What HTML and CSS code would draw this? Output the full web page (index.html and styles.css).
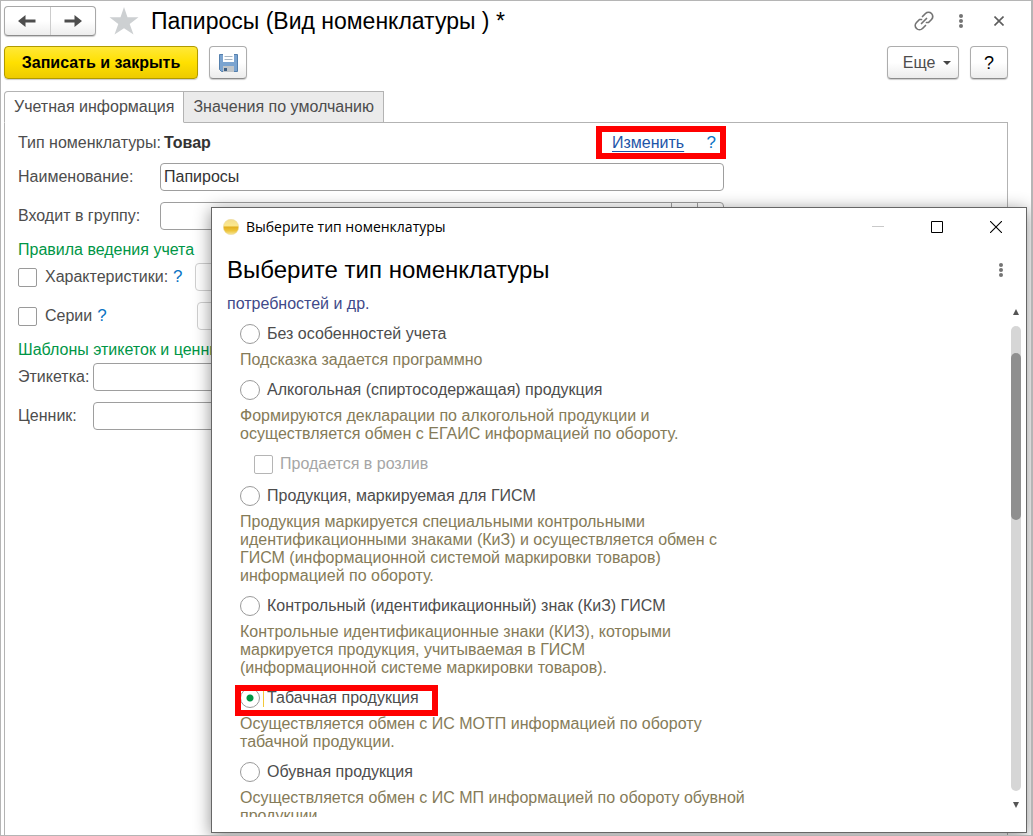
FILE: index.html
```html
<!DOCTYPE html>
<html lang="ru">
<head>
<meta charset="utf-8">
<title>Папиросы (Вид номенклатуры)</title>
<link rel="stylesheet" href="styles.css">
</head>
<body>
<div class="app">
  <header class="header">
    <div class="nav">
      <button type="button" class="nav-btn" aria-label="Назад"><svg width="18" height="14" viewBox="0 0 18 14"><path d="M0 7L7.500 1V5.500H17.500V8.500H7.500V13Z" fill="#4d4d4d"/></svg></button>
      <button type="button" class="nav-btn" aria-label="Вперед"><svg width="18" height="14" viewBox="0 0 18 14"><path d="M18 7L10.500 1V5.500H.5V8.500H10.500V13Z" fill="#4d4d4d"/></svg></button>
    </div>
    <button type="button" class="icon-btn star" aria-label="Избранное"><svg width="30" height="28" viewBox="0 0 30 28"><path d="M15 0L18.500 10.200H29.500L20.700 16.900L24.500 27.500L15 21.200L5.500 27.500L9.300 16.900L.5 10.200H11.500Z" fill="#cdd0d2"/></svg></button>
    <h1 class="title">Папиросы (Вид номенклатуры ) *</h1>
    <div class="header-tools">
      <button type="button" class="icon-btn" aria-label="Ссылка"><svg width="20" height="20" viewBox="0 0 20 20" fill="none" stroke="#747474" stroke-width="1.700" stroke-linecap="round"><path d="M8.500 5.500L11.500 2.500A4 4 0 0 1 17.500 8.500L14.500 11.500H12.500M11.500 14.500L8.500 17.500A4 4 0 0 1 2.500 11.500L5.500 8.500H7.500M7.500 12.500L12.500 7.500"/></svg></button>
      <button type="button" class="icon-btn" aria-label="Меню"><svg width="4" height="14" viewBox="0 0 4 14" fill="#747474"><circle cx="2" cy="2" r="2"/><circle cx="2" cy="7" r="2"/><circle cx="2" cy="12" r="2"/></svg></button>
      <button type="button" class="icon-btn close" aria-label="Закрыть"><svg width="10" height="10" viewBox="0 0 10 10" stroke="#5d5d5d" stroke-width="1.600"><path d="M.5 .5L9.500 9.500M9.500 .5L.5 9.500"/></svg></button>
    </div>
  </header>

  <div class="commands">
    <button type="button" class="btn btn-primary">Записать и закрыть</button>
    <button type="button" class="btn btn-square" aria-label="Записать"><svg width="19" height="18" viewBox="0 0 19 18"><path d="M.5 .5H18.500V17.500H2.500L.5 15.500Z" fill="#7ba4d0" stroke="#5580ad"/><path d="M4 0H15V8H4Z" fill="#fff"/><path d="M5.500 2.500H13.500M5.500 5.500H13.500" stroke="#a9b6c2"/><path d="M4 12H15V18H4Z" fill="#c0c5c9"/><path d="M5 14H8V17H5Z" fill="#3f6084"/></svg></button>
    <span class="spacer"></span>
    <button type="button" class="btn btn-more">Еще <svg width="8" height="4" viewBox="0 0 8 4"><path d="M0 0H8L4 4Z" fill="#444"/></svg></button>
    <button type="button" class="btn btn-square btn-help">?</button>
  </div>

  <div class="tabs" role="tablist">
    <button type="button" role="tab" class="tab tab-active" aria-selected="true">Учетная информация</button>
    <button type="button" role="tab" class="tab" aria-selected="false">Значения по умолчанию</button>
  </div>

  <main class="panel">
    <div class="row row-type">
      <span class="label-wide">Тип номенклатуры:</span>
      <strong class="type-value">Товар</strong>
      <span class="type-link"><a href="#">Изменить</a><a class="hint-link" href="#">?</a></span>
    </div>
    <div class="row">
      <label class="label-wide" for="name">Наименование:</label>
      <input class="field" id="name" type="text" value="Папиросы">
    </div>
    <div class="row">
      <label class="label-wide" for="group">Входит в группу:</label>
      <div class="field field-group">
        <input id="group" type="text">
        <button type="button" aria-label="Выбрать"></button>
        <button type="button" aria-label="Открыть"></button>
      </div>
    </div>
    <h2 class="section">Правила ведения учета</h2>
    <div class="row row-first">
      <input class="check" type="checkbox" id="chars">
      <label for="chars">Характеристики:</label>
      <a class="hint-link" href="#">?</a>
      <input class="field field-muted" type="text" aria-label="Вид характеристик" disabled>
    </div>
    <div class="row">
      <input class="check" type="checkbox" id="series">
      <label for="series">Серии</label>
      <a class="hint-link" href="#">?</a>
      <input class="field field-muted field-series" type="text" aria-label="Вид серий" disabled>
    </div>
    <h2 class="section">Шаблоны этикеток и ценников</h2>
    <div class="row row-first">
      <label class="label-narrow" for="tag">Этикетка:</label>
      <input class="field" id="tag" type="text">
    </div>
    <div class="row">
      <label class="label-narrow" for="price">Ценник:</label>
      <input class="field" id="price" type="text">
    </div>
  </main>

  <section class="dialog" role="dialog" aria-labelledby="dialog-title">
    <div class="titlebar">
      <svg width="16" height="16" viewBox="0 0 16 16"><defs><linearGradient id="ball" x1="0" y1="0" x2="0" y2="1"><stop offset="0" stop-color="#f3dc8c"/><stop offset=".4" stop-color="#fbe88f"/><stop offset=".52" stop-color="#e3b021"/><stop offset=".75" stop-color="#edc53c"/><stop offset="1" stop-color="#f8e9a0"/></linearGradient></defs><circle cx="8" cy="8" r="7.700" fill="url(#ball)" stroke="#ead9a0" stroke-width=".5"/></svg>
      <span class="titlebar-text">Выберите тип номенклатуры</span>
      <div class="window-tools">
        <button type="button" class="icon-btn" aria-label="Свернуть"><svg width="12" height="12" viewBox="0 0 12 12"><path d="M0 5.500H12" stroke="#c9c9c9"/></svg></button>
        <button type="button" class="icon-btn" aria-label="Развернуть"><svg width="12" height="12" viewBox="0 0 12 12"><path d="M.5 .5H11.500V11.500H.5Z" fill="none" stroke="#000"/></svg></button>
        <button type="button" class="icon-btn" aria-label="Закрыть окно"><svg width="12" height="12" viewBox="0 0 12 12"><path d="M0 0L12 12M12 0L0 12" stroke="#000" stroke-width="1.100"/></svg></button>
      </div>
    </div>
    <div class="dialog-head">
      <h2 id="dialog-title">Выберите тип номенклатуры</h2>
      <button type="button" class="icon-btn" aria-label="Меню окна"><svg width="4" height="14" viewBox="0 0 4 14" fill="#747474"><circle cx="2" cy="2" r="2"/><circle cx="2" cy="7" r="2"/><circle cx="2" cy="12" r="2"/></svg></button>
    </div>
    <div class="dialog-body">
      <div class="options">
        <p class="lead">потребностей и др.</p>
        <label class="option"><input type="radio" name="kind">Без особенностей учета</label>
        <p class="note">Подсказка задается программно</p>
        <label class="option"><input type="radio" name="kind">Алкогольная (спиртосодержащая) продукция</label>
        <p class="note">Формируются декларации по алкогольной продукции и<br>осуществляется обмен с ЕГАИС информацией по обороту.</p>
        <label class="option option-sub"><input class="check" type="checkbox" disabled>Продается в розлив</label>
        <label class="option"><input type="radio" name="kind">Продукция, маркируемая для ГИСМ</label>
        <p class="note">Продукция маркируется специальными контрольными<br>идентификационными знаками (КиЗ) и осуществляется обмен с<br>ГИСМ (информационной системой маркировки товаров)<br>информацией по обороту.</p>
        <label class="option"><input type="radio" name="kind">Контрольный (идентификационный) знак (КиЗ) ГИСМ</label>
        <p class="note">Контрольные идентификационные знаки (КИЗ), которыми<br>маркируется продукция, учитываемая в ГИСМ<br>(информационной системе маркировки товаров).</p>
        <label class="option option-marked"><input type="radio" name="kind" checked><span class="focused">Табачная продукция</span></label>
        <p class="note">Осуществляется обмен с ИС МОТП информацией по обороту<br>табачной продукции.</p>
        <label class="option"><input type="radio" name="kind">Обувная продукция</label>
        <p class="note">Осуществляется обмен с ИС МП информацией по обороту обувной<br>продукции.</p>
      </div>
      <div class="scrollbar" aria-hidden="true">
        <svg width="6" height="6" viewBox="0 0 6 6"><path d="M3 0L6 6H0Z" fill="#555"/></svg>
        <div class="track"><div class="thumb"></div></div>
        <svg width="6" height="6" viewBox="0 0 6 6"><path d="M3 6L6 0H0Z" fill="#555"/></svg>
      </div>
    </div>
  </section>
</div>
</body>
</html>
```
FILE: styles.css
```css
*, *::before, *::after { box-sizing: border-box; }

body {
  margin: 0;
  font: 16px/18px "Liberation Sans", Arial, sans-serif;
  color: #4d4d4d;
  background: #fff;
}

h1, h2, p { margin: 0; font-weight: normal; }

button, input { font: inherit; color: inherit; }

.app {
  position: relative;
  display: flex;
  flex-direction: column;
  height: 100vh;
  padding: 4px 0 0 3px;
  border: 1px solid #b5b5b5;
  border-right-width: 2px;
  overflow: hidden;
}

/* Header */
.header { display: flex; align-items: center; height: 31px; }

.nav {
  display: flex;
  width: 92px;
  height: 30px;
  border: 1px solid #a8a8a8;
  border-bottom-color: #8c8c8c;
  border-radius: 4px;
  background: linear-gradient(#fff 50%, #ededed);
  box-shadow: 0 1px 1px #ccc;
}

.nav-btn {
  display: flex;
  flex: 1;
  align-items: center;
  justify-content: center;
  padding: 0;
  border: 0;
  background: none;
}

.nav-btn + .nav-btn { border-left: 1px solid #ccc; }

.icon-btn { display: flex; padding: 0; border: 0; background: none; }

.star { margin: 0 12px 0 13px; }

.title { color: #000; font-size: 23px; line-height: 28px; }

.header-tools {
  display: flex;
  align-items: center;
  gap: 25px;
  margin-left: auto;
  padding-right: 27px;
}

.close { margin-left: 6px; }

/* Commands */
.commands {
  display: flex;
  align-items: flex-start;
  gap: 11px;
  margin-top: 10px;
  padding-right: 23px;
}

.spacer { flex: 1; }

.btn {
  display: flex;
  align-items: center;
  justify-content: center;
  height: 33px;
  padding: 0;
  border: 1px solid #adadad;
  border-bottom-color: #8c8c8c;
  border-radius: 4px;
  background: linear-gradient(#fff 50%, #ececec);
  box-shadow: 0 1px 1px #ccc;
}

.btn-primary {
  width: 194px;
  border-color: #b09a00;
  background: linear-gradient(#ffe838, #ffe000 50%, #edcb00);
  color: #000;
  font-weight: bold;
}

.btn-square { width: 38px; }
.btn-more { gap: 8px; width: 72px; padding-left: 8px; }
.btn-help { color: #000; font-size: 18px; }

/* Tabs */
.tabs { display: flex; margin-top: 12px; }

.tab {
  z-index: 1;
  height: 32px;
  padding: 0 9px;
  border: 1px solid #b3b3b3;
  border-left: 0;
  background: #ebebeb;
}

.tab-active {
  border-left: 1px solid #b3b3b3;
  border-bottom-color: #fff;
  border-radius: 4px 0 0 0;
  background: #fff;
}

.panel {
  flex: 1;
  margin: -1px 23px 0 0;
  padding: 3px 0 0 13px;
  border: 1px solid #b3b3b3;
  border-bottom: 0;
}

/* Form */
.row {
  display: flex;
  align-items: center;
  width: 706px;
  max-width: 100%;
  height: 28px;
  margin-top: 11px;
}

.row-type { width: 708px; height: 33px; margin: 0; }
.row-type + .row { margin-top: 4px; }
.row-first { margin-top: 3px; }

.label-wide { width: 142px; white-space: nowrap; }
.label-narrow { width: 75px; }
.type-value { padding-left: 4px; color: #333; }

.type-link {
  display: flex;
  align-items: center;
  justify-content: space-between;
  width: 130px;
  height: 33px;
  margin-left: auto;
  padding: 0 4px 0 10px;
  border: 6px solid #f00;
}

a { color: #1d55a8; text-underline-offset: 3px; }
.hint-link { color: #0b74c4; font-size: 17px; text-decoration: none; }

.field {
  flex: 1;
  min-width: 0;
  height: 28px;
  padding: 0 3px;
  border: 1px solid #9e9e9e;
  border-radius: 4px;
  background: #fff;
  color: #333;
}

.field-group { display: flex; padding: 0; }
.field-group input { flex: 1; min-width: 0; border: 0; background: none; }
.field-group button { width: 26px; padding: 0; border: 0; border-left: 1px solid #9e9e9e; background: none; }
.field-muted { margin-left: 12px; border-color: #d0d0d0; }
.field-series { margin-left: 90px; }

.section { height: 20px; margin-top: 10px; color: #009646; font-size: 16px; line-height: 20px; }

.check {
  appearance: none;
  flex: none;
  width: 19px;
  height: 19px;
  margin: 0;
  border: 1px solid #9a9a9a;
  border-radius: 2px;
  background: #fff;
}

.row .check { margin-right: 8px; }
.row label + .hint-link { margin-left: 5px; }

/* Dialog floats over the form */
.dialog {
  position: absolute;
  z-index: 2;
  inset: 206px 4px 2px 210px;
  display: flex;
  flex-direction: column;
  border: 1px solid #666;
  background: #fff;
  box-shadow: 0 3px 16px rgba(0, 0, 0, 0.45);
}

.titlebar {
  display: flex;
  align-items: center;
  gap: 7px;
  height: 37px;
  padding: 0 24px 0 11px;
  color: #000;
}

.titlebar-text { font: 14px/20px "Open Sans", "Noto Sans", sans-serif; }
.window-tools { display: flex; gap: 47px; margin-left: auto; }

.dialog-head {
  display: flex;
  align-items: center;
  justify-content: space-between;
  height: 50px;
  padding: 0 23px 0 15px;
}

.dialog-head h2 { color: #000; font-size: 24px; line-height: 28px; }

.dialog-body { display: flex; flex: 1; min-height: 0; padding-bottom: 15px; }
.options { flex: 1; padding-left: 28px; overflow: hidden; }
.lead { margin-left: -13px; color: #3f4a8a; }

.option { position: relative; display: flex; align-items: center; height: 20px; margin-top: 11px; }
.option-sub { margin-left: 14px; color: #a6a6a6; }
.option-sub .check { margin-right: 7px; border-color: #b5b5b5; }
.option-sub + .option { margin-top: 12px; }
.note { margin-top: 7px; color: #857b58; }

.option input[type="radio"] {
  appearance: none;
  width: 20px;
  height: 20px;
  margin: 0 7px 0 0;
  border: 1px solid #9a9a9a;
  border-radius: 50%;
  background: #fff;
}

.option input[type="radio"]:checked { background: radial-gradient(circle, #009646 3px, #fff 4px); }

.option.option-marked input[type="radio"] { margin-right: 3px; }
.focused { padding-left: 3px; border-left: 1px solid #f2c83a; }

.option-marked::after {
  content: "";
  position: absolute;
  top: -3px;
  left: -5px;
  width: 203px;
  height: 31px;
  border: 6px solid #f00;
}

/* Scrollbar */
.scrollbar {
  display: flex;
  flex-direction: column;
  align-items: center;
  gap: 11px;
  width: 10px;
  margin: 14px 5px 9px 0;
}

.track { display: flow-root; flex: 1; width: 10px; border-radius: 5px; background: #d6d6d6; }
.thumb { height: 36%; margin-top: 27px; border-radius: 5px; background: #8f8f8f; }
```
